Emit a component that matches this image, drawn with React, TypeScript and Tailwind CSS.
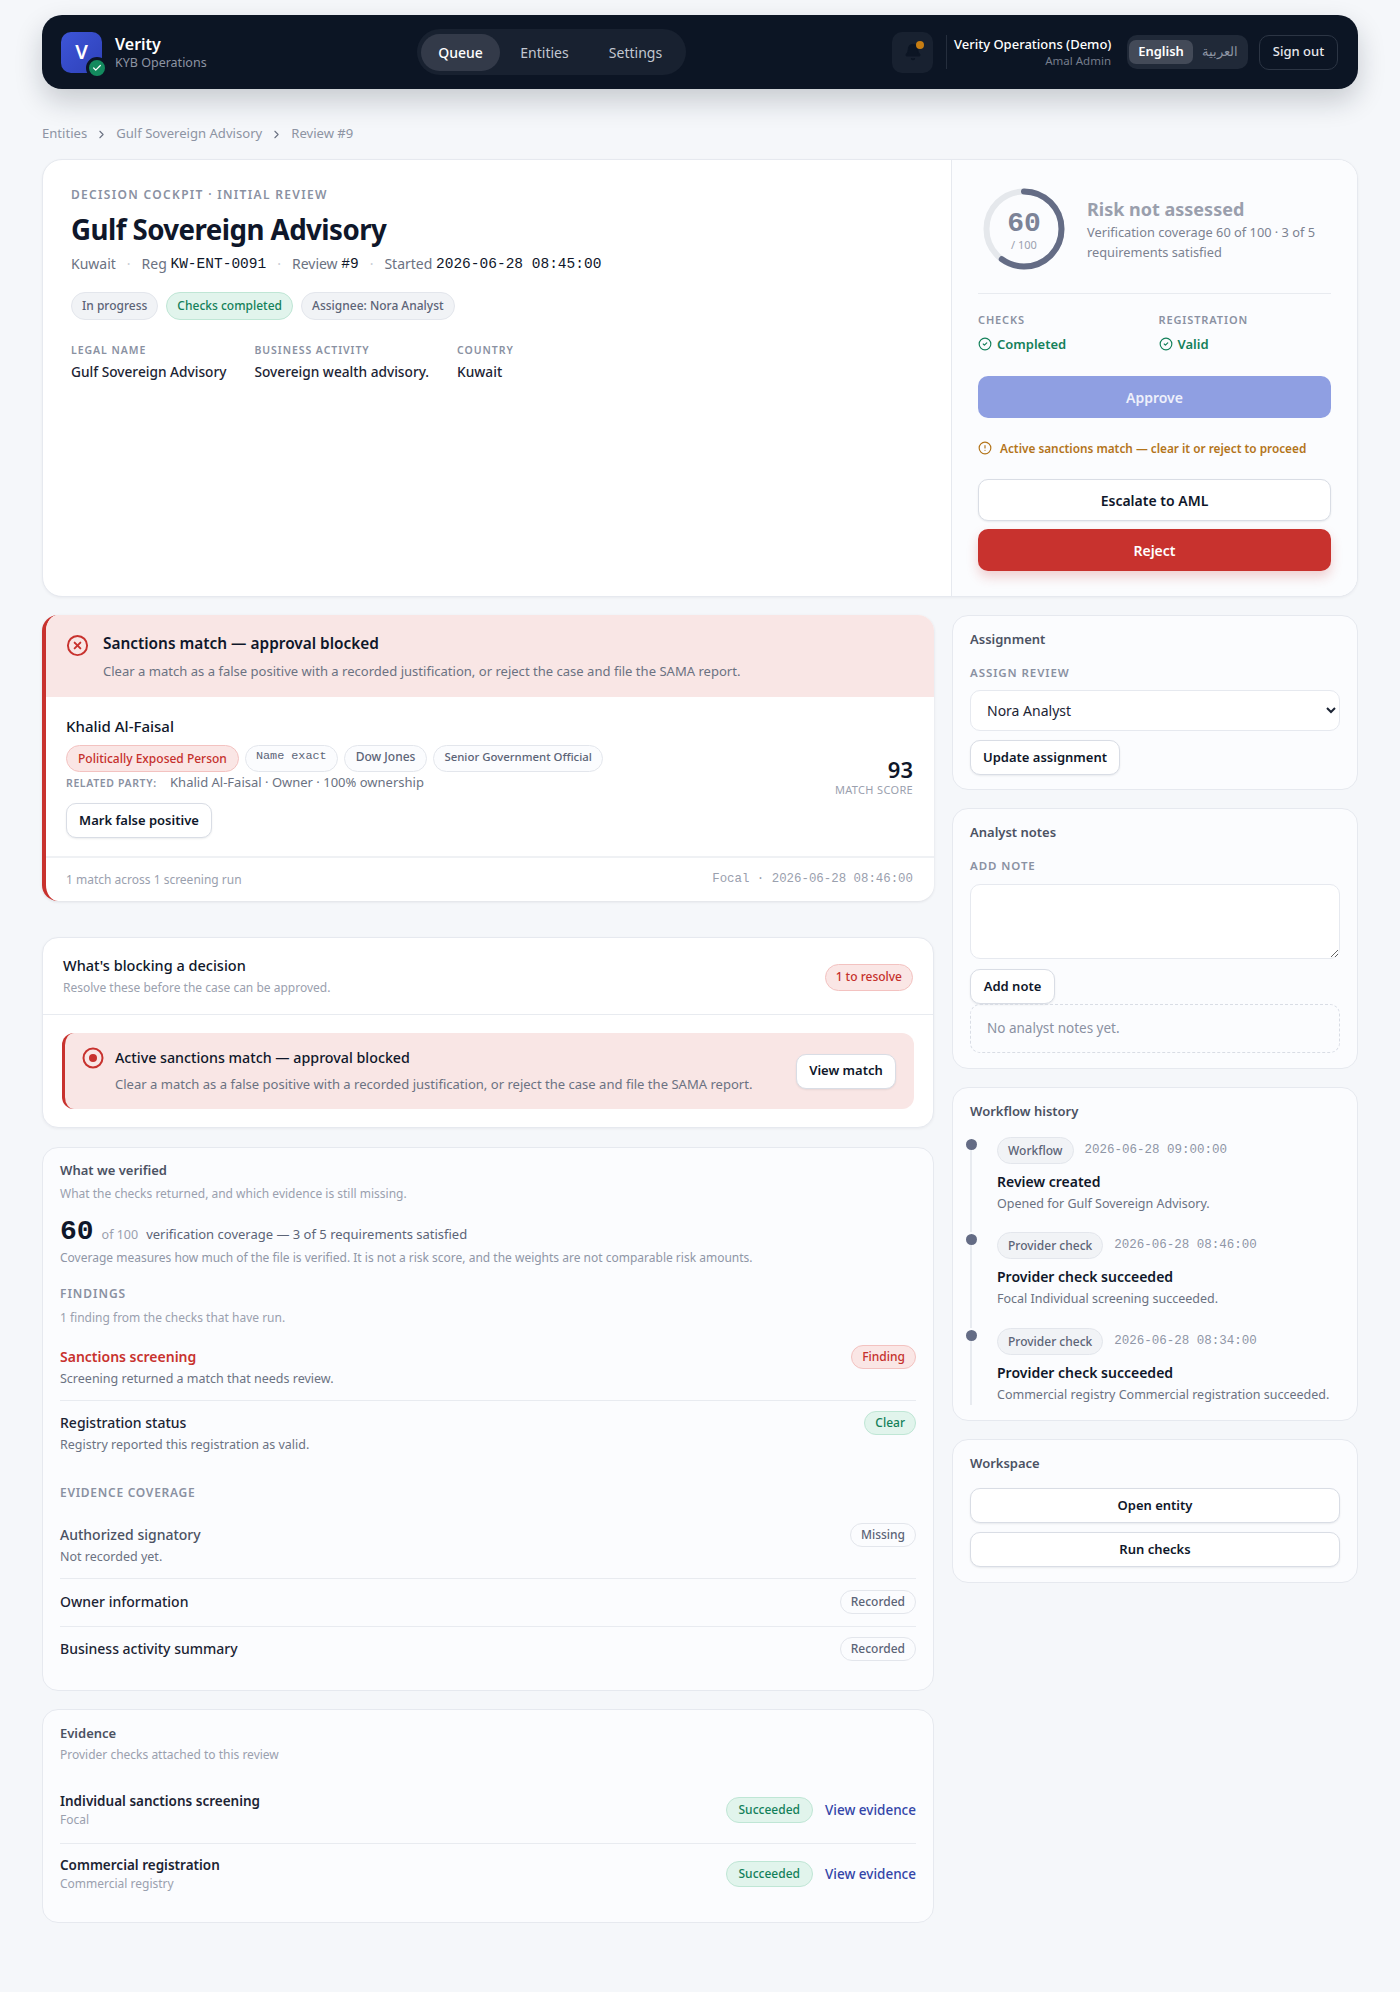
import React from "react";
import { Check, ChevronRight, CircleCheck, CircleAlert, CircleX, Bell } from "lucide-react";

const mono = "font-['Liberation_Mono',monospace]";

function Pill({ children, tone = "gray", className = "" }: { children: React.ReactNode; tone?: string; className?: string }) {
  const tones: Record<string, string> = {
    gray: "bg-[#f1f3f6] border-[#e3e6ec] text-[#5c6477]",
    green: "bg-[#e1f4ec] border-[#bfe6d5] text-[#13805a]",
    red: "bg-[#fae6e5] border-[#f3c2c0] text-[#c5302c]",
    white: "bg-[#fbfcfe] border-[#e3e6ec] text-[#5c6477]",
  };
  return (
    <span className={`inline-flex items-center h-[24px] px-[10px] rounded-full border text-[12px] font-medium whitespace-nowrap ${tones[tone]} ${className}`}>
      {children}
    </span>
  );
}

function Btn({ children, className = "" }: { children: React.ReactNode; className?: string }) {
  return (
    <button className={`flex items-center justify-center h-[35px] px-[14px] bg-white border border-[#d9dde5] rounded-[10px] text-[13px] font-semibold whitespace-nowrap text-[#0f172a] shadow-[0_1px_2px_rgba(15,23,42,0.08)] ${className}`}>
      {children}
    </button>
  );
}

function Label({ children, className = "" }: { children: React.ReactNode; className?: string }) {
  return <div className={`font-semibold uppercase text-[#8a91a2] leading-[14px] ${className}`}>{children}</div>;
}

function Side({ title, children, className = "pb-[15px]" }: { title: string; children: React.ReactNode; className?: string }) {
  return (
    <section className={`bg-[#fbfcfe] border border-[#e6e9ef] rounded-[16px] px-[17px] pt-[13px] ${className}`}>
      <h3 className="text-[13px] font-semibold text-[#4b5263] leading-[20px]">{title}</h3>
      {children}
    </section>
  );
}

function TimelineItem({ tag, time, title, desc, pb }: { tag: string; time: string; title: string; desc: string; pb: string }) {
  return (
    <div className={`relative pl-[27px] ${pb}`}>
      <span className="absolute left-[-4px] top-[2px] w-[11px] h-[11px] rounded-full bg-[#646c85]" />
      <span className="absolute left-[0px] top-[13px] bottom-0 w-[2px] bg-[#e8ebf0]" />
      <div className="flex items-center gap-[11px]">
        <Pill tone="gray" className="h-[27px]">{tag}</Pill>
        <span className={`${mono} text-[12.5px] text-[#8f96a6]`}>{time}</span>
      </div>
      <div className="mt-[8px] text-[14px] font-semibold leading-[20px] text-[#0f172a]">{title}</div>
      <div className="mt-[2px] text-[12.5px] leading-[20px] text-[#6b7282]">{desc}</div>
    </div>
  );
}

function Row({ title, desc, pill, tone, titleClass = "font-medium text-[#1c2434]", className = "" }: { title: string; desc?: string; pill: string; tone: string; titleClass?: string; className?: string }) {
  return (
    <div className={`flex items-start justify-between ${className}`}>
      <div>
        <div className={`text-[14px] leading-[20px] ${titleClass}`}>{title}</div>
        {desc && <div className="mt-[2px] text-[12.5px] leading-[20px] text-[#6b7282]">{desc}</div>}
      </div>
      <Pill tone={tone} className="-mt-[2px]">{pill}</Pill>
    </div>
  );
}

export default function App() {
  return (
    <div className="min-h-[1992px] bg-[#f5f7fa] font-['Noto_Sans',sans-serif] text-[#0f172a] px-[42px] pt-[15px]">
      <header className="flex items-center h-[74px] rounded-[20px] bg-[#0c1524] pl-[19px] pr-[20px] shadow-[0_12px_28px_rgba(15,23,42,0.2)]">
        <div className="flex items-center w-[356px] shrink-0">
          <div className="relative w-[41px] h-[41px] mr-[12px] rounded-[10px] bg-gradient-to-br from-[#3d55d8] to-[#2f41b8] flex items-center justify-center text-white text-[20px] font-semibold">
            V
            <span className="absolute right-[-6px] bottom-[-6px] w-[16px] h-[16px] rounded-full bg-[#138a5e] border-[3px] border-[#0c1524] box-content flex items-center justify-center">
              <Check size={10} strokeWidth={3} className="text-white" />
            </span>
          </div>
          <div className="ml-[1px]">
            <div className="text-[16px] font-semibold leading-[20px] text-white">Verity</div>
            <div className="text-[12.5px] leading-[17px] text-[#8d94a3]">KYB Operations</div>
          </div>
        </div>
        <nav className="flex items-center h-[46px] p-[4px] mr-auto rounded-full bg-[#182130]">
          <span className="flex items-center justify-center w-[79px] h-[37px] rounded-full bg-[#333a49] text-[14px] font-medium text-white">Queue</span>
          <span className="w-[89px] text-center text-[14px] text-[#c2c7d0]">Entities</span>
          <span className="w-[93px] text-center text-[14px] text-[#c2c7d0]">Settings</span>
        </nav>
        <div className="flex items-center">
          <div className="relative w-[41px] h-[41px] rounded-[10px] bg-[#182130] flex items-center justify-center">
            <Bell size={18} className="text-[#0c1524] fill-[#0c1524]" />
            <span className="absolute right-[9px] top-[9px] w-[8px] h-[8px] rounded-full bg-[#c77d12]" />
          </div>
          <div className="w-px h-[34px] bg-[#252e3d] ml-[13px] mr-[7px]" />
          <div className="w-[157px] text-right whitespace-nowrap">
            <div className="text-[13px] font-medium leading-[17px] text-white">Verity Operations (Demo)</div>
            <div className="text-[11.5px] leading-[16px] text-[#767d8c]">Amal Admin</div>
          </div>
          <div className="flex items-center w-[121px] h-[34px] ml-[16px] p-[2px] rounded-[10px] bg-[#202938]">
            <span className="flex items-center justify-center w-[64px] h-[24px] rounded-[7px] bg-[#434a58] text-[13px] font-semibold text-white">English</span>
            <span className="flex-1 text-center text-[13px] text-[#8d94a3]">العربية</span>
          </div>
          <button className="ml-[11px] w-[79px] h-[35px] rounded-[10px] border border-[#2c3544] text-[13px] font-medium text-[#e6e8ec]">Sign out</button>
        </div>
      </header>

      <div className="flex items-center mt-[35px] h-[20px] text-[13.1px] text-[#8d94a3]">
        Entities
        <ChevronRight size={13} className="mx-[8px] text-[#6b7282]" />
        Gulf Sovereign Advisory
        <ChevronRight size={13} className="mx-[8px] text-[#6b7282]" />
        Review #9
      </div>

      <section className="flex h-[438px] mt-[15px] bg-white border border-[#e6e9ef] rounded-[20px] shadow-[0_1px_3px_rgba(15,23,42,0.05)] overflow-hidden">
        <div className="flex-1 px-[28px] pt-[27px]">
          <div className="text-[12px] font-semibold tracking-[0.11em] uppercase text-[#8a91a2] leading-[16px]">Decision cockpit · Initial review</div>
          <h1 className="mt-[7px] text-[27.7px] font-bold leading-[38px] tracking-[-0.02em] text-[#0f172a]">Gulf Sovereign Advisory</h1>
          <div className="mt-[6px] flex items-center text-[14px] leading-[20px] text-[#6b7282]">
            Kuwait<span className="mx-[11px] text-[#c8ccd4]">·</span>
            Reg&nbsp;<span className={`${mono} text-[#0f172a] text-[14.5px]`}>KW-ENT-0091</span><span className="mx-[11px] text-[#c8ccd4]">·</span>
            Review&nbsp;<span className={`${mono} text-[#0f172a] text-[14.5px]`}>#9</span><span className="mx-[11px] text-[#c8ccd4]">·</span>
            Started&nbsp;<span className={`${mono} text-[#0f172a] text-[14.5px]`}>2026-06-28 08:45:00</span>
          </div>
          <div className="mt-[18px] flex gap-[8px]">
            <Pill tone="gray" className="h-[28px]">In progress</Pill>
            <Pill tone="green" className="h-[28px]">Checks completed</Pill>
            <Pill tone="gray" className="h-[28px]">Assignee: Nora Analyst</Pill>
          </div>
          <div className="mt-[23px] flex gap-[28px]">
            {[["Legal name", "Gulf Sovereign Advisory"], ["Business activity", "Sovereign wealth advisory."], ["Country", "Kuwait"]].map(([k, v]) => (
              <div key={k}>
                <Label className="text-[10.5px] tracking-[0.09em]">{k}</Label>
                <div className="mt-[5px] text-[13.7px] font-medium leading-[20px] text-[#1c2434]">{v}</div>
              </div>
            ))}
          </div>
        </div>
        <aside className="w-[406px] shrink-0 bg-[#fbfcfe] border-l border-[#e6e9ef] px-[26px] pt-[28px]">
          <div className="flex items-center pb-[23px] border-b border-[#e8ebf0]">
            <div className="relative w-[82px] h-[82px] ml-[5px] shrink-0">
              <svg viewBox="0 0 82 82" className="w-[82px] h-[82px] -rotate-90">
                <circle cx="41" cy="41" r="37.5" fill="none" stroke="#e5e8ec" strokeWidth="6" />
                <circle cx="41" cy="41" r="37.5" fill="none" stroke="#646c85" strokeWidth="6" strokeLinecap="round" strokeDasharray="141.4 235.6" />
              </svg>
              <div className="absolute inset-0 flex flex-col items-center justify-center pt-[3px]">
                <div className={`${mono} text-[28px] font-bold leading-[28px] text-[#7c8397]`}>60</div>
                <div className="text-[11px] leading-[14px] text-[#9aa0ae]">/ 100</div>
              </div>
            </div>
            <div className="ml-[22px]">
              <div className="text-[18px] font-bold leading-[26px] text-[#9a9fad]">Risk not assessed</div>
              <div className="text-[12.8px] leading-[20px] text-[#7b8291]">Verification coverage 60 of 100 · 3 of 5 requirements satisfied</div>
            </div>
          </div>
          <div className="mt-[19px] grid grid-cols-2">
            <div>
              <Label className="text-[11px] tracking-[0.08em]">Checks</Label>
              <div className="mt-[7px] flex items-center gap-[5px] text-[13px] font-semibold leading-[20px] text-[#13805a]"><CircleCheck size={14} strokeWidth={2} /> Completed</div>
            </div>
            <div className="ml-[4px]">
              <Label className="text-[11px] tracking-[0.08em]">Registration</Label>
              <div className="mt-[7px] flex items-center gap-[5px] text-[13px] font-semibold leading-[20px] text-[#13805a]"><CircleCheck size={14} strokeWidth={2} /> Valid</div>
            </div>
          </div>
          <button className="mt-[22px] w-full h-[42px] rounded-[10px] bg-[#8f9fe2] text-[14px] font-semibold text-[#eef0fb]">Approve</button>
          <div className="mt-[21px] flex items-center gap-[8px] text-[11.8px] font-semibold leading-[18px] text-[#b3741a]"><CircleAlert size={14} /> Active sanctions match — clear it or reject to proceed</div>
          <Btn className="mt-[22px] w-full h-[42px] text-[14px]">Escalate to AML</Btn>
          <button className="mt-[8px] w-full h-[42px] rounded-[10px] bg-[#c8322e] text-[14px] font-semibold text-white shadow-[0_6px_12px_rgba(200,50,46,0.22)]">Reject</button>
        </aside>
      </section>

      <div className="mt-[18px] grid grid-cols-[892px_406px] gap-[18px] items-start">
        <div className="flex flex-col">
          <section className="bg-white border-l-[4px] border-l-[#c8322e] rounded-[16px] shadow-[0_1px_3px_rgba(15,23,42,0.1)] overflow-hidden">
            <div className="bg-[#f9e6e5] h-[82px] pl-[20px] pt-[18px] flex">
              <CircleX size={23} strokeWidth={2} className="text-[#c8322e] shrink-0 mt-[1px]" />
              <div className="ml-[14px]">
                <div className="text-[15.4px] font-semibold leading-[22px] text-[#0f172a]">Sanctions match — approval blocked</div>
                <div className="mt-[6px] text-[13.05px] leading-[20px] text-[#6b7282]">Clear a match as a false positive with a recorded justification, or reject the case and file the SAMA report.</div>
              </div>
            </div>
            <div className="flex justify-between pl-[20px] pr-[21px] pt-[18px] pb-[18px] border-b-2 border-[#eff1f4]">
              <div>
                <div className="text-[15px] font-medium leading-[22px] text-[#0f172a]">Khalid Al-Faisal</div>
                <div className="mt-[8px] flex items-start gap-[6px]">
                  <Pill tone="red" className="h-[27px] px-[11px]">Politically Exposed Person</Pill>
                  <Pill tone="white" className="h-[27px] pb-[3px]"><span className={`${mono} text-[11.8px]`}>Name exact</span></Pill>
                  <Pill tone="white" className="h-[27px] pb-[3px] px-[11px]">Dow Jones</Pill>
                  <Pill tone="white" className="h-[27px] pb-[3px]"><span className="text-[11.4px]">Senior Government Official</span></Pill>
                </div>
                <div className="mt-[1px] text-[13px] leading-[18px] text-[#6b7282]"><span className="text-[10.5px] font-semibold tracking-[0.06em] text-[#8a91a2] mr-[10px]">RELATED PARTY:</span> Khalid Al-Faisal · Owner · 100% ownership</div>
                <Btn className="mt-[11px] w-[146px] px-0">Mark false positive</Btn>
              </div>
              <div className="text-right self-center">
                <div className="text-[22px] font-semibold leading-[26px] text-[#0f172a]">93</div>
                <div className="text-[11px] tracking-[0.03em] leading-[16px] text-[#9aa0ae]">MATCH SCORE</div>
              </div>
            </div>
            <div className="flex items-center justify-between h-[43px] pl-[20px] pr-[21px] text-[12px] text-[#9aa0ae]">
              <span>1 match across 1 screening run</span>
              <span className={`${mono} text-[12.4px]`}>Focal · 2026-06-28 08:46:00</span>
            </div>
          </section>

          <section className="mt-[36px] bg-white border border-[#e6e9ef] rounded-[16px] shadow-[0_1px_3px_rgba(15,23,42,0.05)]">
            <div className="flex items-center justify-between px-[20px] h-[77px] border-b border-[#e8ebf0]">
              <div className="mb-[1px]">
                <div className="text-[14.5px] font-medium leading-[22px] text-[#0f172a]">What's blocking a decision</div>
                <div className="mt-[3px] text-[12px] leading-[18px] text-[#9aa0ae]">Resolve these before the case can be approved.</div>
              </div>
              <Pill tone="red" className="h-[27px] mt-[2px]">1 to resolve</Pill>
            </div>
            <div className="px-[19px] pt-[18px] pb-[18px]">
              <div className="flex items-center justify-between h-[76px] pl-[17px] pr-[18px] bg-[#f9e6e5] border-l-[3px] border-l-[#c8322e] rounded-[12px]">
                <div className="flex mb-[2px]">
                  <svg width="22" height="22" viewBox="0 0 22 22" className="shrink-0"><circle cx="11" cy="11" r="9.5" fill="none" stroke="#c8322e" strokeWidth="2" /><circle cx="11" cy="11" r="4" fill="#c8322e" /></svg>
                  <div className="ml-[11px]">
                    <div className="text-[14.25px] font-medium leading-[22px] text-[#0f172a]">Active sanctions match — approval blocked</div>
                    <div className="mt-[5px] text-[13.05px] leading-[20px] text-[#6b7282]">Clear a match as a false positive with a recorded justification, or reject the case and file the SAMA report.</div>
                  </div>
                </div>
                <Btn className="shrink-0 w-[100px] px-0">View match</Btn>
              </div>
            </div>
          </section>

          <section className="mt-[19px] h-[544px] bg-[#fbfcfe] border border-[#e6e9ef] rounded-[16px] px-[17px] pt-[12px]">
            <div className="text-[13px] font-semibold leading-[20px] text-[#4b5263]">What we verified</div>
            <div className="mt-[5px] text-[12px] leading-[18px] text-[#9aa0ae]">What the checks returned, and which evidence is still missing.</div>
            <div className="mt-[11px] flex items-baseline">
              <span className={`${mono} text-[28px] font-bold leading-[36px] text-[#0f172a]`}>60</span>
              <span className="ml-[8px] text-[12.5px] text-[#9aa0ae]">of 100</span>
              <span className="ml-[8px] text-[13px] text-[#5c6477]">verification coverage — 3 of 5 requirements satisfied</span>
            </div>
            <div className="text-[12px] leading-[16px] text-[#8f96a6]">Coverage measures how much of the file is verified. It is not a risk score, and the weights are not comparable risk amounts.</div>
            <div className="mt-[20px] text-[12px] font-semibold tracking-[0.08em] leading-[16px] text-[#8a91a2]">FINDINGS</div>
            <div className="mt-[7px] text-[12px] leading-[18px] text-[#9aa0ae]">1 finding from the checks that have run.</div>
            <Row title="Sanctions screening" desc="Screening returned a match that needs review." pill="Finding" tone="red" titleClass="font-semibold text-[#c8322e]" className="mt-[20px] pb-[11px] border-b border-[#e8ebf0]" />
            <Row title="Registration status" desc="Registry reported this registration as valid." pill="Clear" tone="green" className="pt-[12px]" />
            <div className="mt-[30px] text-[12px] font-semibold tracking-[0.06em] leading-[16px] text-[#8a91a2]">EVIDENCE COVERAGE</div>
            <Row title="Authorized signatory" desc="Not recorded yet." pill="Missing" tone="white" titleClass="font-medium text-[#4b5263]" className="mt-[24px] pb-[11px] border-b border-[#e8ebf0]" />
            <Row title="Owner information" pill="Recorded" tone="white" className="pt-[13px] pb-[12px] border-b border-[#e8ebf0]" />
            <Row title="Business activity summary" pill="Recorded" tone="white" className="pt-[12px]" />
          </section>

          <section className="mt-[18px] h-[214px] bg-[#fbfcfe] border border-[#e6e9ef] rounded-[16px] px-[17px] pt-[13px]">
            <div className="text-[13px] font-semibold leading-[20px] text-[#4b5263]">Evidence</div>
            <div className="mt-[3px] text-[12px] leading-[18px] text-[#9aa0ae]">Provider checks attached to this review</div>
            {[["Individual sanctions screening", "Focal"], ["Commercial registration", "Commercial registry"]].map(([t, s], i) => (
              <div key={t} className={`flex items-center justify-between ${i === 0 ? "mt-[27px] pb-[14px] border-b border-[#e8ebf0]" : "pt-[11px]"}`}>
                <div>
                  <div className="text-[13.5px] font-semibold leading-[20px] text-[#1c2434]">{t}</div>
                  <div className="text-[12px] leading-[18px] text-[#9aa0ae]">{s}</div>
                </div>
                <div className="flex items-center gap-[12px]">
                  <Pill tone="green" className="h-[26px] px-[12px]">Succeeded</Pill>
                  <span className="text-[13.5px] font-medium text-[#3345a8]">View evidence</span>
                </div>
              </div>
            ))}
          </section>
        </div>

        <div className="flex flex-col gap-[18px]">
          <Side title="Assignment" className="pb-[14px]">
            <Label className="mt-[17px] text-[11.5px] tracking-[0.08em]">Assign review</Label>
            <select className="mt-[10px] w-full h-[41px] pl-[12px] pr-[4px] bg-white border border-[#e6e9ef] rounded-[10px] text-[14px] text-[#1c2434]" defaultValue="Nora Analyst">
              <option>Nora Analyst</option>
            </select>
            <Btn className="mt-[9px] w-[150px] px-0">Update assignment</Btn>
          </Side>
          <Side title="Analyst notes">
            <Label className="mt-[17px] text-[11.5px] tracking-[0.08em]">Add note</Label>
            <textarea className="mt-[11px] block w-full h-[75px] bg-white border border-[#e6e9ef] rounded-[10px]" />
            <Btn className="mt-[10px] w-[85px] px-0">Add note</Btn>
            <div className="flex items-center h-[49px] px-[16px] border border-dashed border-[#d9dde5] rounded-[10px] text-[13.5px] text-[#8a91a2]">No analyst notes yet.</div>
          </Side>
          <Side title="Workflow history">
            <div className="mt-[16px]">
              <TimelineItem tag="Workflow" time="2026-06-28 09:00:00" title="Review created" desc="Opened for Gulf Sovereign Advisory." pb="pb-[18px]" />
              <TimelineItem tag="Provider check" time="2026-06-28 08:46:00" title="Provider check succeeded" desc="Focal Individual screening succeeded." pb="pb-[19px]" />
              <TimelineItem tag="Provider check" time="2026-06-28 08:34:00" title="Provider check succeeded" desc="Commercial registry Commercial registration succeeded." pb="pb-0" />
            </div>
          </Side>
          <Side title="Workspace">
            <Btn className="mt-[15px] w-full">Open entity</Btn>
            <Btn className="mt-[9px] w-full">Run checks</Btn>
          </Side>
        </div>
      </div>
    </div>
  );
}
